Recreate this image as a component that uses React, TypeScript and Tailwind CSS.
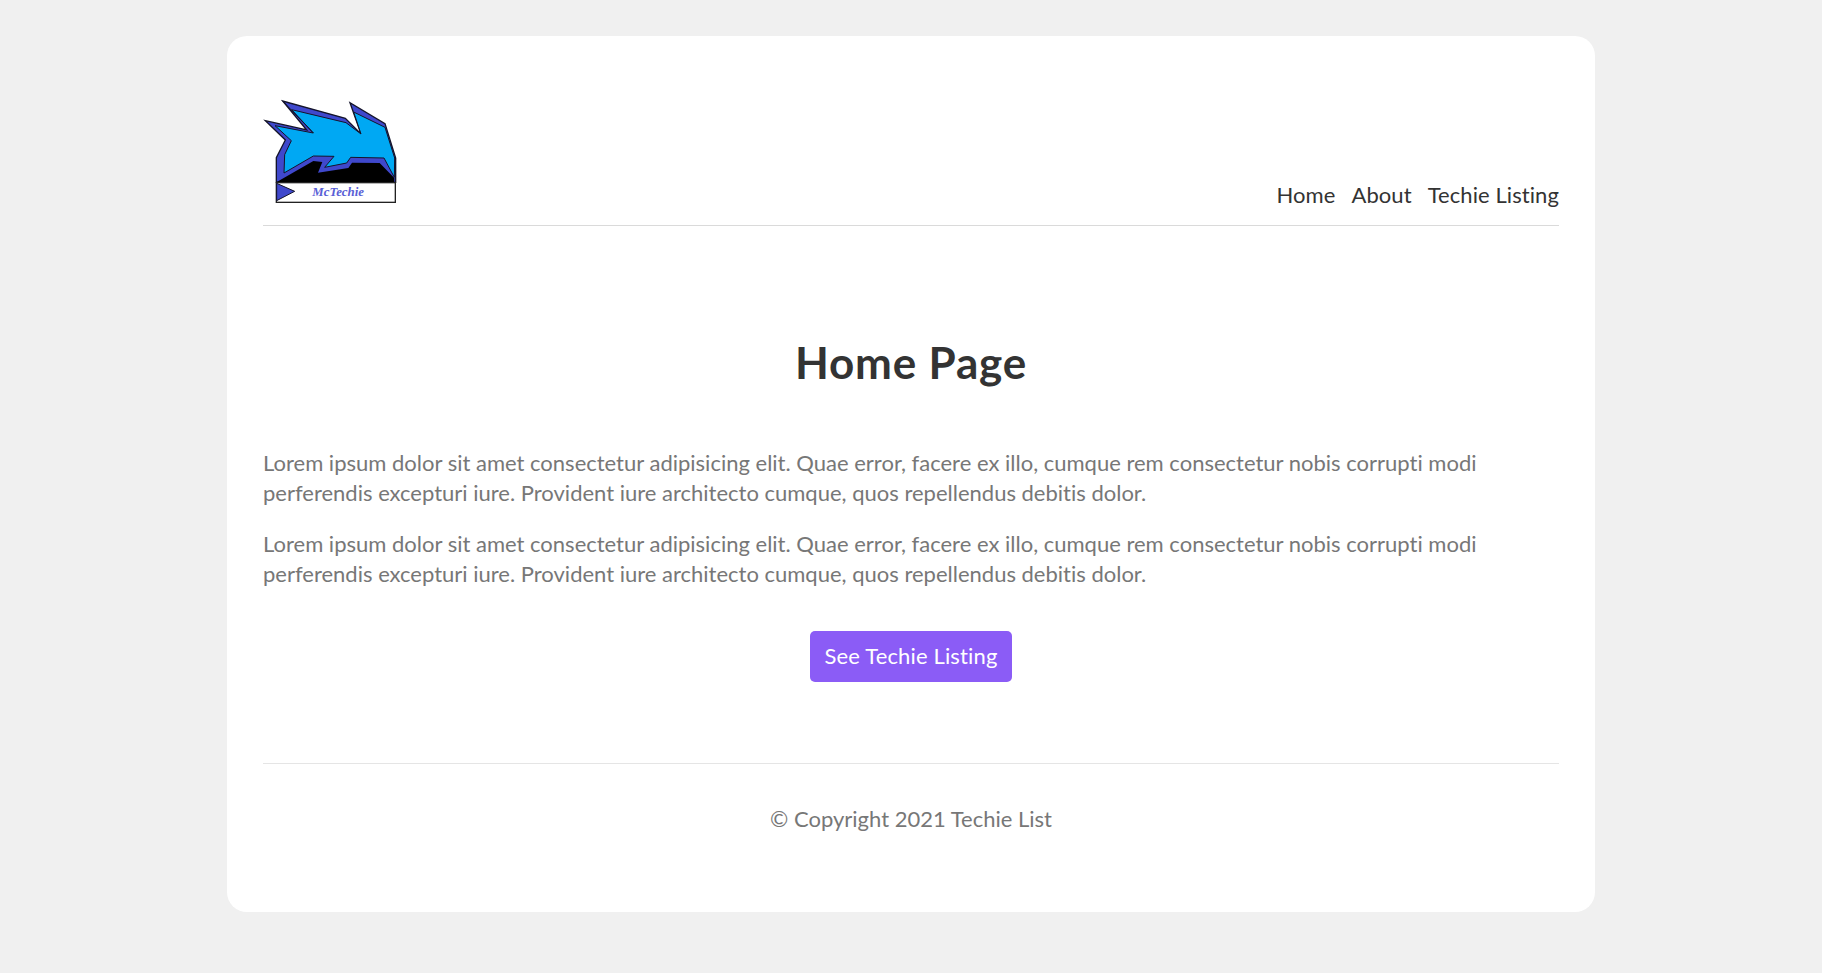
const LOREM_FIRST =
  "Lorem ipsum dolor sit amet consectetur adipisicing elit. Quae error, facere ex illo, cumque rem consectetur nobis corrupti modi";
const LOREM_SECOND =
  "perferendis excepturi iure. Provident iure architecto cumque, quos repellendus debitis dolor.";

function Logo() {
  return (
    <svg viewBox="39 27 411 324" className="mb-[3px] block h-[108px] w-[137px]" role="img" aria-label="McTechie">
      <path
        d="M79 276 V203 L106 150 L46 92 L170 120 L98 33 L286 85 L333 132 L300 38 L405 101 L437 204 V277 Z"
        fill="#3f48cc"
        stroke="#14142a"
        strokeWidth="4"
      />
      <path
        d="M79 277 L190 213 L217 216 L204 248 L295 234 L306 218 L389 219 L433 264 V277 Z"
        fill="#000"
      />
      <path
        d="M102 249 L104 194 L124 152 L75 107 L190 129 L125 59 L288 98 L333 132 L311 66 L405 112 L434 204 L433 262 L402 204 L302 202 L290 219 L224 232 L252 199 L190 198 Z"
        fill="#00a8f3"
        stroke="#14142a"
        strokeWidth="3"
      />
      <path d="M98 33 L190 129" stroke="#14142a" strokeWidth="3" />
      <rect x="79" y="278" width="357" height="59" fill="#fff" stroke="#222" strokeWidth="4" />
      <path d="M80 280 L134 304 L80 332 Z" fill="#3f48cc" stroke="#14142a" strokeWidth="3" />
      <text
        x="187"
        y="319"
        textLength="155"
        lengthAdjust="spacingAndGlyphs"
        fill="#5a5fd6"
        className="font-['Liberation_Serif',serif] text-[36px] font-bold italic"
      >
        McTechie
      </text>
    </svg>
  );
}

function Paragraph() {
  return (
    <p className="leading-[30.4px] whitespace-nowrap text-[#777]">
      <span className="block">{LOREM_FIRST}</span>
      <span className="block">{LOREM_SECOND}</span>
    </p>
  );
}

export default function App() {
  return (
    <div className="min-h-[973px] bg-[#f0f0f0] pt-9 font-[Lato,sans-serif] text-[22px] text-[#333] [font-variant-ligatures:none]">
      <div className="mx-auto flex h-[876px] w-[1368px] flex-col rounded-[20px] bg-white p-9">
        <header className="flex h-[154px] shrink-0 items-end justify-between border-b border-[#dadada] pb-[15px]">
          <Logo />
          <nav className="flex gap-4 leading-[30px] tracking-[0.08px]">
            <a href="#home">Home</a>
            <a href="#about">About</a>
            <a href="#listing">Techie Listing</a>
          </nav>
        </header>
        <main className="flex flex-col items-center pt-[106px]">
          <h1 className="text-[44px] leading-[60px] font-bold tracking-[0.8px]">Home Page</h1>
          <div className="flex w-full flex-col gap-5 pt-[56px]">
            <Paragraph />
            <Paragraph />
          </div>
          <a
            href="#listing"
            className="mt-[41px] flex h-[51px] w-[202px] items-center justify-center rounded-[5px] bg-[#8b5cf6] pb-px tracking-[0.15px] whitespace-nowrap text-white"
          >
            See Techie Listing
          </a>
        </main>
        <footer className="mt-[81px] flex justify-center border-t border-[#e5e5e5] pt-10 leading-[30px] text-[#777]">
          © Copyright 2021 Techie List
        </footer>
      </div>
    </div>
  );
}
